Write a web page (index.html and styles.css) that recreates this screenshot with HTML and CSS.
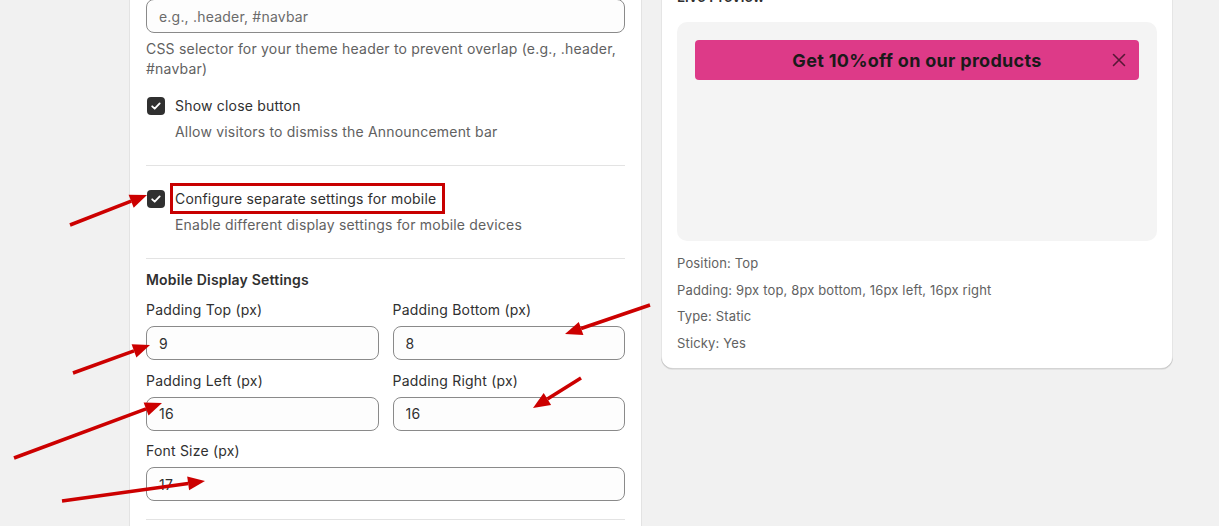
FILE: index.html
```html
<!DOCTYPE html>
<html lang="en">
<head>
<meta charset="utf-8">
<title>Announcement bar settings</title>
<link rel="stylesheet" href="styles.css">
</head>
<body>
<div class="page">
  <div class="layout">
    <section class="card form-card">
      <div class="field">
        <label class="field-label" for="hdr">Header Selector (optional)</label>
        <input class="input" id="hdr" type="text" placeholder="e.g., .header, #navbar">
        <p class="help">CSS selector for your theme header to prevent overlap (e.g., .header, #navbar)</p>
      </div>

      <div class="check-group first">
        <div class="check-row">
          <span class="checkbox"><svg viewBox="0 0 18 18" width="18" height="18"><path d="M5.2 9.3l2.5 2.4 5-5.3" fill="none" stroke="#fff" stroke-width="1.8" stroke-linecap="round" stroke-linejoin="round"/></svg></span>
          <span class="check-label">Show close button</span>
        </div>
        <p class="check-help">Allow visitors to dismiss the Announcement bar</p>
      </div>

      <div class="divider"></div>

      <div class="check-group second">
        <div class="check-row">
          <span class="checkbox"><svg viewBox="0 0 18 18" width="18" height="18"><path d="M5.2 9.3l2.5 2.4 5-5.3" fill="none" stroke="#fff" stroke-width="1.8" stroke-linecap="round" stroke-linejoin="round"/></svg></span>
          <span class="check-label highlighted">Configure separate settings for mobile</span>
        </div>
        <p class="check-help">Enable different display settings for mobile devices</p>
      </div>

      <div class="divider"></div>

      <h3 class="section-title">Mobile Display Settings</h3>
      <div class="grid">
        <div class="grid-field">
          <label class="field-label" for="pt">Padding Top (px)</label>
          <input class="input" id="pt" type="text" value="9">
        </div>
        <div class="grid-field">
          <label class="field-label" for="pb">Padding Bottom (px)</label>
          <input class="input" id="pb" type="text" value="8">
        </div>
        <div class="grid-field">
          <label class="field-label" for="pl">Padding Left (px)</label>
          <input class="input" id="pl" type="text" value="16">
        </div>
        <div class="grid-field">
          <label class="field-label" for="pr">Padding Right (px)</label>
          <input class="input" id="pr" type="text" value="16">
        </div>
        <div class="grid-field full">
          <label class="field-label" for="fs">Font Size (px)</label>
          <input class="input" id="fs" type="text" value="17">
        </div>
      </div>
      <div class="divider last"></div>
      <div class="spacer"></div>
    </section>

    <aside class="card preview-card">
      <h2 class="preview-title">Live Preview</h2>
      <div class="preview-box">
        <div class="bar">
          Get 10%off on our products
          <span class="bar-close"><svg viewBox="0 0 14 14" width="14" height="14"><path d="M1.5 1.5l11 11M12.5 1.5l-11 11" stroke="currentColor" stroke-width="1.6" stroke-linecap="round"/></svg></span>
        </div>
      </div>
      <div class="preview-info">
        <p>Position: Top</p>
        <p>Padding: 9px top, 8px bottom, 16px left, 16px right</p>
        <p>Type: Static</p>
        <p>Sticky: Yes</p>
      </div>
    </aside>
  </div>

  <svg class="annotations" width="1219" height="526" viewBox="0 0 1219 526">
    <g stroke="#cc0000" stroke-width="3.5" fill="none">
      <line x1="70" y1="225" x2="131.2" y2="201.2"/>
      <line x1="73" y1="373" x2="134" y2="350.8"/>
      <line x1="14" y1="458" x2="146.1" y2="408.9"/>
      <line x1="62" y1="501" x2="188.2" y2="483.4"/>
      <line x1="650" y1="305" x2="581.1" y2="328.5"/>
      <line x1="581" y1="378" x2="547.4" y2="399"/>
    </g>
    <g fill="#cc0000">
      <polygon points="147,195 133.7,207.7 128.6,194.7"/>
      <polygon points="150,345 136.4,357.4 131.6,344.2"/>
      <polygon points="162,403 148.5,415.5 143.6,402.4"/>
      <polygon points="205,481 189.1,490.3 187.2,476.4"/>
      <polygon points="565,334 578.8,321.9 583.4,335.1"/>
      <polygon points="533,408 543.7,393.1 551.1,404.9"/>
    </g>
  </svg>
</div>
</body>
</html>
```

FILE: styles.css
```css
* {
  box-sizing: border-box;
}

body {
  margin: 0;
  background: #f1f1f1;
  font-family: Inter, "Noto Sans", sans-serif;
  font-size: 14px;
  line-height: 20px;
  letter-spacing: 0.2px;
  color: #303030;
}

.page {
  position: relative;
  width: 1219px;
  height: 526px;
  overflow: hidden;
}

.layout {
  display: flex;
  align-items: flex-start;
  gap: 19px;
  padding-left: 129px;
  margin-top: -44px;
}

.card {
  background: #fff;
}

.form-card {
  width: 513px;
  border: 1px solid #e3e3e3;
  border-radius: 12px;
  padding: 16px;
}

.field-label {
  display: block;
  margin-bottom: 6px;
  color: #303030;
}

.input {
  display: block;
  width: 100%;
  height: 34px;
  padding: 0 12px;
  border: 1px solid #8a8a8a;
  border-radius: 8px;
  background: #fdfdfd;
  font-family: inherit;
  font-size: 14px;
  letter-spacing: 0.2px;
  color: #303030;
  outline: none;
}

.input::placeholder {
  color: #6b6b6b;
}

.help {
  margin: 6px 0 0;
  color: #616161;
}

.check-group.first {
  margin-top: 17px;
}

.check-group.second {
  margin-top: 23px;
}

.check-row {
  display: flex;
  align-items: center;
  gap: 10px;
}

.checkbox {
  width: 18px;
  height: 18px;
  margin-left: 1px;
  border-radius: 4px;
  background: #303030;
  display: flex;
}

.check-label {
  position: relative;
}

.check-label.highlighted::after {
  content: "";
  position: absolute;
  left: -5px;
  right: -9px;
  top: -6px;
  bottom: -5px;
  border: 3px solid #c80000;
}

.check-help {
  margin: 6px 0 0;
  padding-left: 29px;
  color: #616161;
}

.divider {
  height: 1px;
  background: #e3e3e3;
  margin-top: 23px;
}

.divider.last {
  margin-top: 18px;
}

.spacer {
  height: 40px;
}

.section-title {
  margin: 11px 0 0;
  font-size: 14px;
  line-height: 20px;
  font-weight: 600;
  color: #303030;
}

.grid {
  margin-top: 10px;
  display: grid;
  grid-template-columns: 1fr 1fr;
  column-gap: 14px;
  row-gap: 10.5px;
}

.grid-field.full {
  grid-column: 1 / -1;
}

.preview-card {
  width: 512px;
  margin-top: 15px;
  padding: 16px;
  border-radius: 12px;
  box-shadow:
    inset 1px 0 0 rgba(0, 0, 0, 0.1),
    inset -1px 0 0 rgba(0, 0, 0, 0.1),
    inset 0 -1px 0 rgba(0, 0, 0, 0.17),
    0 1px 0 rgba(26, 26, 26, 0.07);
}

.preview-title {
  margin: 0 0 15px;
  font-size: 14px;
  line-height: 20px;
  font-weight: 600;
  color: #303030;
}

.preview-box {
  height: 219px;
  padding: 18px;
  border-radius: 10px;
  background: #f4f4f4;
}

.bar {
  position: relative;
  background: #dd3a88;
  border-radius: 4px;
  padding: 9px 16px 8px;
  font-size: 18px;
  line-height: 23px;
  letter-spacing: 0.3px;
  font-weight: 700;
  text-align: center;
  color: #1a1a1a;
}

.bar-close {
  position: absolute;
  right: 13px;
  top: 13px;
  width: 14px;
  height: 14px;
  display: flex;
  color: rgba(0, 0, 0, 0.6);
}

.preview-info {
  margin-top: 12px;
  display: flex;
  flex-direction: column;
  gap: 6.7px;
  font-size: 13px;
  line-height: 20px;
  letter-spacing: 0.15px;
  color: #616161;
}

.preview-info p {
  margin: 0;
}

.annotations {
  position: absolute;
  top: 0;
  left: 0;
  pointer-events: none;
}
```
